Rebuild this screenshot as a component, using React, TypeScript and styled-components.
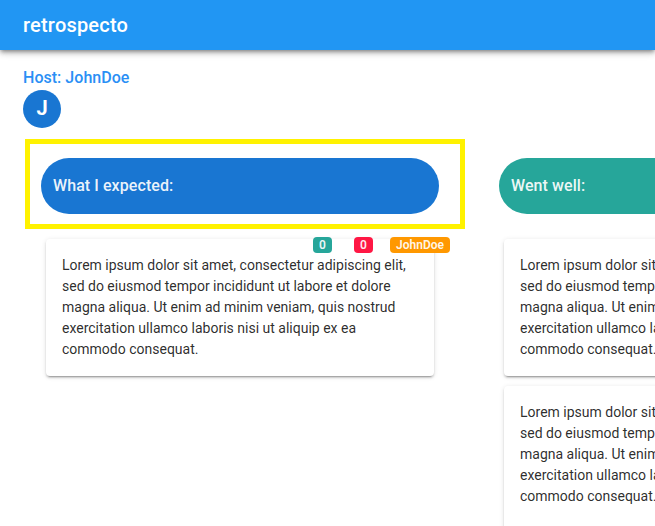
import React from 'react';
import styled, { createGlobalStyle } from 'styled-components';

const GlobalStyle = createGlobalStyle`
  * { box-sizing: border-box; }
  html, body { margin: 0; background: #fff; }
  body { overflow: hidden; font-family: Roboto, sans-serif; }
`;

const Page = styled.div`
  width: 100%;
  height: 100vh;
  overflow: hidden;
`;

const Toolbar = styled.header`
  display: flex;
  align-items: center;
  height: 50px;
  padding: 0 23px;
  background: #2196f3;
  color: #fff;
  box-shadow: 0 2px 4px -1px rgba(0, 0, 0, 0.4), 0 4px 5px rgba(0, 0, 0, 0.14), 0 1px 10px rgba(0, 0, 0, 0.12);
`;

const Brand = styled.h1`
  margin: 0;
  font-size: 20px;
  font-weight: 500;
  line-height: 24px;
  letter-spacing: 0.2px;
`;

const HostPanel = styled.section`
  display: flex;
  flex-direction: column;
  height: 89px;
  padding: 16px 23px 0;
`;

const HostName = styled.div`
  height: 24px;
  font-size: 16px;
  font-weight: 500;
  line-height: 23px;
  letter-spacing: 0.03px;
  color: #2a8ff5;
`;

const Avatar = styled.div`
  width: 38px;
  height: 38px;
  border-radius: 50%;
  background: #1976d2;
  color: #fff;
  font-size: 20px;
  font-weight: 700;
  line-height: 37px;
  text-align: center;
`;

const Board = styled.main`
  display: grid;
  grid-template-columns: 440px 440px;
  column-gap: 18px;
  padding-left: 25px;
`;

const Column = styled.section`
  display: flex;
  flex-direction: column;
`;

const Heading = styled.div<{ $selected?: boolean }>`
  height: 90px;
  padding: 14px 21px 0 11px;
  border: 5px solid ${(p) => (p.$selected ? '#fff200' : 'transparent')};
`;

const Pill = styled.h2<{ $color: string }>`
  height: 56px;
  margin: 0;
  padding: 0 12px;
  border-radius: 28px;
  background: ${(p) => p.$color};
  color: rgba(255, 255, 255, 0.93);
  font-size: 16px;
  font-weight: 500;
  line-height: 55px;
  letter-spacing: 0.08px;
`;

const Cards = styled.div`
  display: flex;
  flex-direction: column;
  gap: 10px;
  padding: 10px 31px 0 21px;
`;

const Card = styled.article<{ $height: number }>`
  position: relative;
  height: ${(p) => p.$height}px;
  padding: 16px;
  border-radius: 4px;
  background: #fff;
  box-shadow: 0 3px 1px -2px rgba(0, 0, 0, 0.2), 0 2px 2px rgba(0, 0, 0, 0.14), 0 1px 5px rgba(0, 0, 0, 0.12);
  font-size: 14px;
  line-height: 21px;
  color: rgba(0, 0, 0, 0.84);
`;

const Line = styled.div`
  white-space: nowrap;
`;

const Badges = styled.div`
  position: absolute;
  top: -2px;
  right: -16px;
  display: flex;
  align-items: center;
`;

const Badge = styled.span<{ $color: string; $width: number; $gap?: number }>`
  width: ${(p) => p.$width}px;
  height: 16px;
  margin-left: ${(p) => p.$gap ?? 0}px;
  border-radius: 4px;
  background: ${(p) => p.$color};
  color: rgba(255, 255, 255, 0.93);
  font-size: 12px;
  font-weight: 600;
  line-height: 16px;
  text-align: center;
  white-space: nowrap;
`;

const note = [
  'Lorem ipsum dolor sit amet, consectetur adipiscing elit,',
  'sed do eiusmod tempor incididunt ut labore et dolore',
  'magna aliqua. Ut enim ad minim veniam, quis nostrud',
  'exercitation ullamco laboris nisi ut aliquip ex ea',
  'commodo consequat.',
];

const NoteCard = ({ author, height = 137 }: { author?: string; height?: number }) => (
  <Card $height={height}>
    {note.map((line) => (
      <Line key={line}>{line}</Line>
    ))}
    {author && (
      <Badges>
        <Badge $color="#26a69a" $width={19}>0</Badge>
        <Badge $color="#ff1744" $width={19} $gap={22}>0</Badge>
        <Badge $color="#ff9800" $width={60} $gap={17}>{author}</Badge>
      </Badges>
    )}
  </Card>
);

export default function App() {
  return (
    <Page>
      <GlobalStyle />
      <Toolbar>
        <Brand>retrospecto</Brand>
      </Toolbar>
      <HostPanel>
        <HostName>Host: JohnDoe</HostName>
        <Avatar>J</Avatar>
      </HostPanel>
      <Board>
        <Column>
          <Heading $selected>
            <Pill $color="#1976d2">What I expected:</Pill>
          </Heading>
          <Cards>
            <NoteCard author="JohnDoe" />
          </Cards>
        </Column>
        <Column>
          <Heading>
            <Pill $color="#26a69a">Went well:</Pill>
          </Heading>
          <Cards>
            <NoteCard />
            <NoteCard height={158} />
          </Cards>
        </Column>
      </Board>
    </Page>
  );
}
